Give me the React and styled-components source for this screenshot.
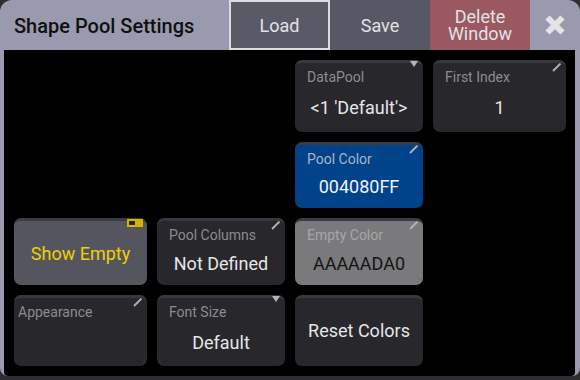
import React from "react";
import styled, { createGlobalStyle, css } from "styled-components";

const Global = createGlobalStyle`
  html, body { margin: 0; padding: 0; background: #2e2e32; }
  body { font-family: Roboto, "Liberation Sans", sans-serif; }
`;

const Window = styled.div`
  width: 580px;
  height: 376px;
  background: #9a9aae;
  border-radius: 12px 12px 8px 8px;
  overflow: hidden;
  display: flex;
  flex-direction: column;
`;

const TitleBar = styled.div`
  height: 50px;
  display: flex;
  align-items: stretch;
  flex-shrink: 0;
`;

const Title = styled.div`
  width: 215px;
  padding-left: 14px;
  display: flex;
  align-items: center;
  font-size: 20px;
  font-weight: 500;
  color: #101010;
  padding-top: 1px;
`;

const BarButton = styled.div`
  width: ${(p) => p.$w || 100}px;
  display: flex;
  flex-direction: column;
  align-items: center;
  justify-content: center;
  text-align: center;
  background: ${(p) => p.$bg || "#5a5a66"};
  color: #e2e2e6;
  font-size: ${(p) => p.$fs || 18}px;
  line-height: ${(p) => p.$lh || "normal"};
  box-sizing: border-box;
  ${(p) =>
    p.$active &&
    css`
      box-shadow: inset 0 0 0 2px #dcdce0;
    `}
`;

const CloseButton = styled.div`
  flex: 1;
  display: flex;
  align-items: center;
  justify-content: center;
`;

const Content = styled.div`
  flex: 1;
  margin: 0 5px 4px 4px;
  background: #000;
  border-radius: 0 0 4px 4px;
  padding: 10px;
`;

const Grid = styled.div`
  display: grid;
  grid-template-columns: 133px 128px 128px 133px;
  grid-template-rows: 72px 66px 67px 71px;
  gap: 10px;
`;

const Tile = styled.div`
  grid-column: ${(p) => p.$col};
  grid-row: ${(p) => p.$row};
  position: relative;
  box-sizing: border-box;
  border-radius: 7px;
  background: ${(p) => p.$bg || "#27272c"};
  border-top: 3px solid ${(p) => p.$strip || "#38383f"};
  display: flex;
  flex-direction: column;
`;

const Label = styled.div`
  margin-top: 8px;
  padding-left: ${(p) => p.$pl ?? 12}px;
  height: 12px;
  line-height: 12px;
  font-size: 14px;
  color: ${(p) => p.$color || "#8c8c90"};
  white-space: nowrap;
`;

const Value = styled.div`
  flex: 1;
  display: flex;
  align-items: center;
  justify-content: center;
  font-size: 18px;
  color: ${(p) => p.$color || "#e6e6e8"};
`;

const Center = styled.div`
  flex: 1;
  display: flex;
  align-items: center;
  justify-content: center;
  font-size: 18px;
  color: ${(p) => p.$color || "#e6e6e8"};
  padding-bottom: ${(p) => p.$pb ?? 0}px;
`;

const Corner = styled.svg`
  position: absolute;
  top: 0px;
  right: 4px;
`;

const Toggle = styled.span`
  position: absolute;
  top: -2px;
  right: 4px;
  width: 16px;
  height: 8px;
  box-sizing: border-box;
  background: #d8b400;
  padding: 2px;
  display: flex;
  &::before {
    content: "";
    width: 6px;
    height: 4px;
    background: #2a2400;
  }
`;

const Line = styled.span`
  display: block;
  height: 17px;
  line-height: 17px;
`;

const Pencil = () => (
  <Corner width="10" height="10" viewBox="0 0 10 10">
    <line x1="1" y1="8" x2="8.5" y2="0.5" stroke="#b4b4b8" strokeWidth="1.8" />
  </Corner>
);

const Triangle = () => (
  <Corner width="10" height="8" viewBox="0 0 10 8" style={{ top: "-2px" }}>
    <polygon points="1,0 9,0 5,6" fill="#b4b4b8" />
  </Corner>
);

const CloseIcon = () => (
  <svg width="24" height="24" viewBox="0 0 24 24">
    <line x1="4.5" y1="4.5" x2="19.5" y2="19.5" stroke="#e4e4e8" strokeWidth="6" />
    <line x1="19.5" y1="4.5" x2="4.5" y2="19.5" stroke="#e4e4e8" strokeWidth="6" />
  </svg>
);

export default function App() {
  return (
    <>
      <Global />
      <Window>
        <TitleBar>
          <Title>Shape Pool Settings</Title>
          <BarButton $active $w={101}>Load</BarButton>
          <BarButton $bg="#585865">Save</BarButton>
          <BarButton $bg="#9a5860" $fs={18}>
            <Line>Delete</Line>
            <Line>Window</Line>
          </BarButton>
          <CloseButton>
            <CloseIcon />
          </CloseButton>
        </TitleBar>
        <Content>
          <Grid>
            <Tile $col={3} $row={1}>
              <Triangle />
              <Label>DataPool</Label>
              <Value>&lt;1 'Default'&gt;</Value>
            </Tile>
            <Tile $col={4} $row={1}>
              <Pencil />
              <Label>First Index</Label>
              <Value>1</Value>
            </Tile>
            <Tile $col={3} $row={2} $bg="#00438a" $strip="#3a3a42">
              <Pencil />
              <Label $color="#a8b4c8">Pool Color</Label>
              <Value $color="#f2f2f4">004080FF</Value>
            </Tile>
            <Tile $col={1} $row={3} $bg="#55555f" $strip="#3c3c44">
              <Toggle />
              <Center $color="#f0d000">Show Empty</Center>
            </Tile>
            <Tile $col={2} $row={3}>
              <Pencil />
              <Label>Pool Columns</Label>
              <Value>Not Defined</Value>
            </Tile>
            <Tile $col={3} $row={3} $bg="#7a7a7c" $strip="#3c3c44">
              <Pencil />
              <Label $color="#a6a6aa">Empty Color</Label>
              <Value $color="#141414">AAAAADA0</Value>
            </Tile>
            <Tile $col={1} $row={4}>
              <Pencil />
              <Label $pl={4}>Appearance</Label>
            </Tile>
            <Tile $col={2} $row={4}>
              <Triangle />
              <Label>Font Size</Label>
              <Value>Default</Value>
            </Tile>
            <Tile $col={3} $row={4}>
              <Center $pb={4}>Reset Colors</Center>
            </Tile>
          </Grid>
        </Content>
      </Window>
    </>
  );
}
